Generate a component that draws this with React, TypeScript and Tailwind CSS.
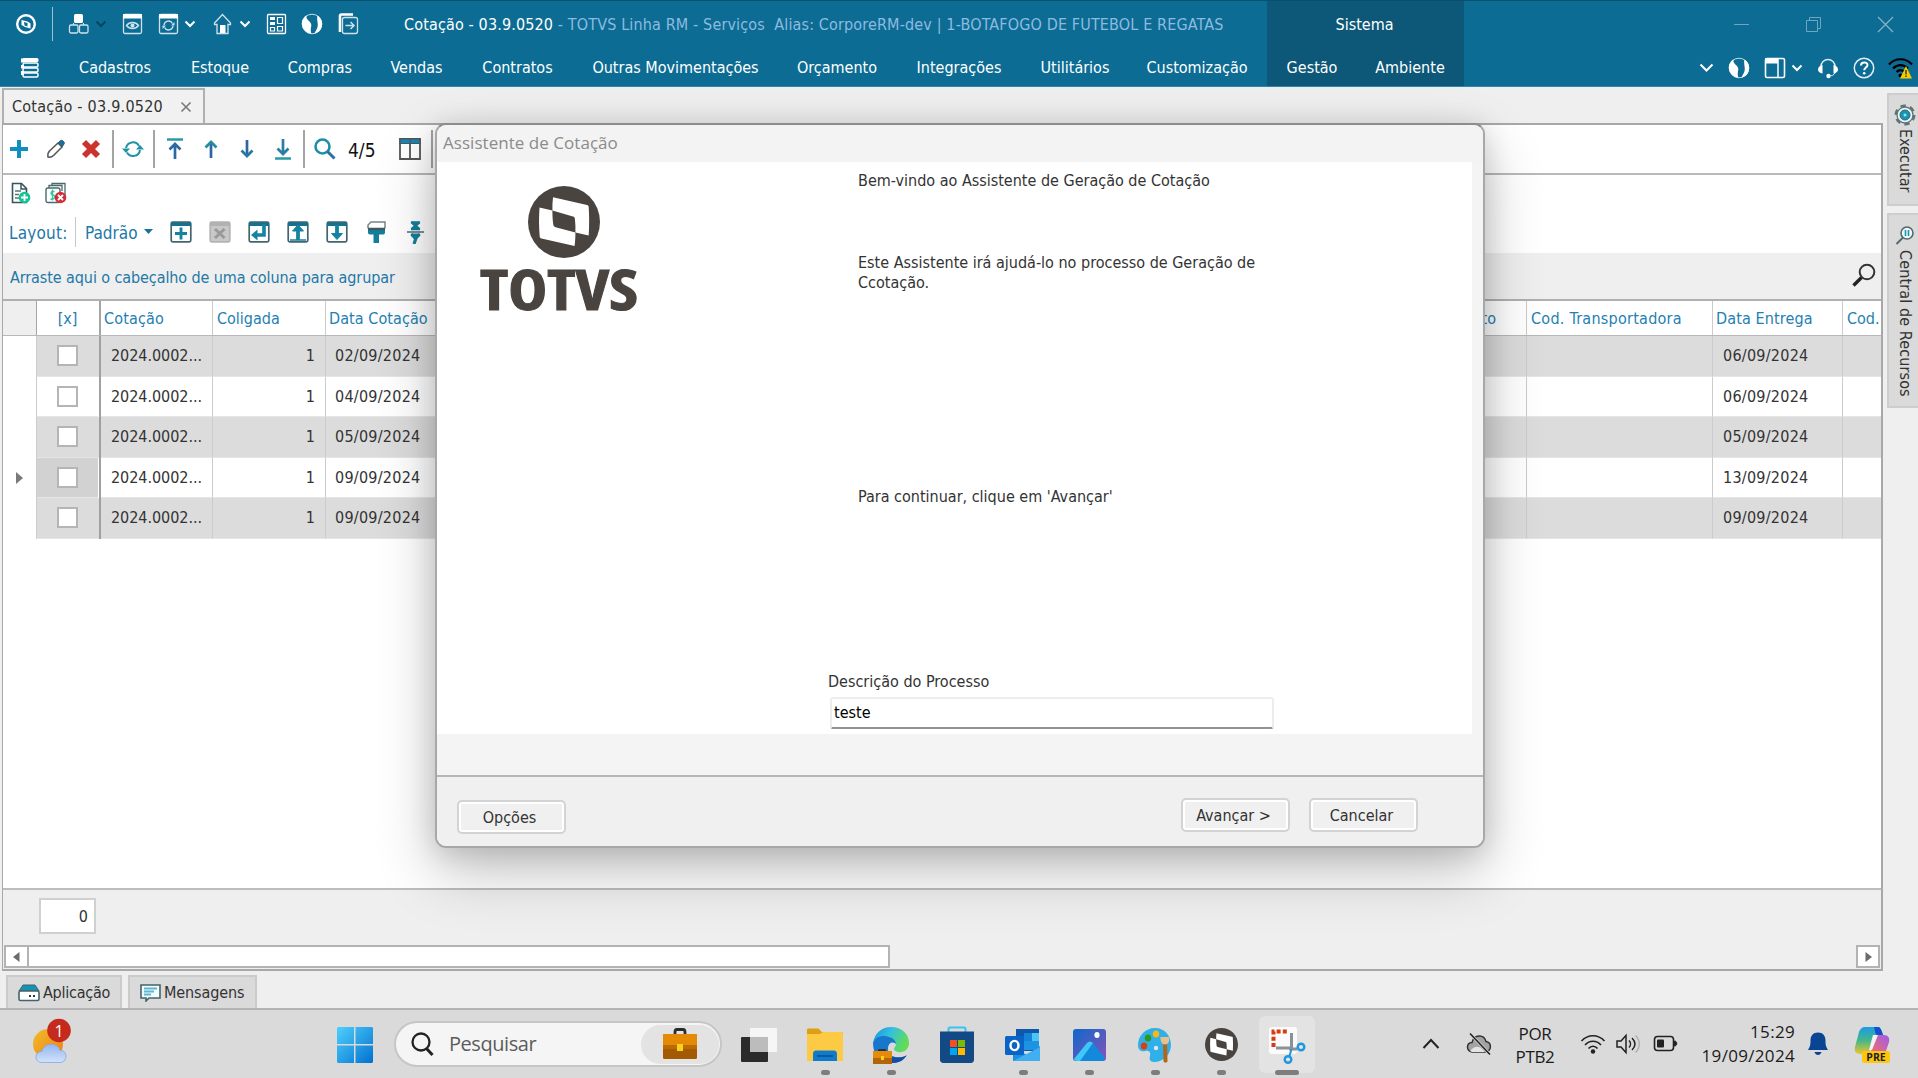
import React from "react";

type SvgProps = { w: number; h: number; className?: string; children: React.ReactNode };

/* Pixel-sized drawing surface for icons. */
function G({ w, h, className = "", children }: SvgProps) {
  return (
    <svg width={w} height={h} viewBox={`0 0 ${w} ${h}`} fill="none" className={`block shrink-0 ${className}`}>
      {children}
    </svg>
  );
}

const Chevron = ({ className = "", color = "#fff" }: { className?: string; color?: string }) => (
  <G w={12} h={8} className={className}>
    <path d="M1.5 1.5 6 6l4.500-4.500" stroke={color} strokeWidth="2" />
  </G>
);

const Globe = ({ className = "" }: { className?: string }) => (
  <G w={22} h={22} className={className}>
    <circle cx="11" cy="11" r="9.800" stroke="#c4dbe6" strokeWidth="1" />
    <path d="M1 8C2 5.500 3.500 3.500 5.500 2.200 5 4.500 6 6.500 8 8c2.200 1.800 2.800 3.800 2 6.500-.5 2-.3 4 .5 6.300C4 20 0 14.500 1 8Z" fill="#fff" />
    <path d="M16.500 2.500c4 2.500 5.500 7 4.200 11.500-.9 3.500-3.700 6-7.200 6.700 1-3 3.300-5.200 3.300-8.700 0-3.500-1.300-6-.3-9.500Z" fill="#fff" />
  </G>
);

const TotvsMark = ({ size, bg, fg, className = "" }: { size: number; bg: string; fg: string; className?: string }) => (
  <svg width={size} height={size} viewBox="0 0 72 72" className={`block shrink-0 ${className}`}>
    <circle cx="36" cy="36" r="36" fill={bg} />
    <path
      fill={fg}
      d="M25 11.200 59 19c1.200.3 1.600.8 1.700 2 .6 9.500.6 18.500 0 28.500l-13.300-2.900c.2-4.600 0-9.200-.5-13.600-.1-1.500-.7-2-2-2.400L24.400 24.600c-.1-4.600.1-9 .6-13.400Z"
    />
    <path
      fill={fg}
      d="m11.500 21.500 12.900 3.100c0 4.600.2 9.500.9 14 .2 1.500.9 2.200 2.300 2.600l19.800 5.400c0 4.700-.2 9-.8 13.400L13.500 52.500c-1.200-.3-1.700-.9-1.800-2-.8-9.500-.9-19-.2-29Z"
    />
  </svg>
);

const MENU = [
  { label: "Cadastros", w: "w-[112px]" },
  { label: "Estoque", w: "w-[98px]" },
  { label: "Compras", w: "w-[102px]" },
  { label: "Vendas", w: "w-[91px]" },
  { label: "Contratos", w: "w-[111px]" },
  { label: "Outras Movimentações", w: "w-[205px]" },
  { label: "Orçamento", w: "w-[118px]" },
  { label: "Integrações", w: "w-[126px]" },
  { label: "Utilitários", w: "w-[106px]" },
  { label: "Customização", w: "w-[138px]" },
];

function TopBar() {
  return (
    <header className="flex h-[87px] shrink-0 border-t border-[#09506f] border-b border-b-[#2f86ab] bg-[#0c6c94] text-white">
      <div className="flex w-[1267px] flex-col">
        <div className="flex h-[46px] items-center">
          <G w={22} h={22} className="ml-[15px]">
            <circle cx="11" cy="11" r="8.800" stroke="#fff" strokeWidth="2.400" />
            <path d="m6.500 7 6 1.500 3 2v5L10 14l-3.500-2Z" fill="#fff" />
            <path d="m9 9 3.500 1v3.500L9.500 12.500Z" fill="#0c6c94" />
          </G>
          <div className="ml-[15px] h-[34px] w-px bg-[#9cc4d6]" />
          <G w={22} h={22} className="ml-[15px]">
            <rect x="6" y="1" width="9" height="9" rx="1.500" fill="#fff" />
            <rect x="1.500" y="12" width="8.500" height="8" rx="1.500" stroke="#cfe2eb" strokeWidth="1.300" />
            <rect x="11.500" y="12" width="8.500" height="8" rx="1.500" stroke="#cfe2eb" strokeWidth="1.300" />
            <path d="M5.500 12v-2M15.500 12v-2" stroke="#cfe2eb" />
          </G>
          <Chevron className="ml-[5px]" color="#0a4560" />
          <G w={22} h={22} className="ml-[15px]">
            <rect x="1.500" y="1.500" width="18" height="19" rx="1.500" stroke="#cfe2eb" strokeWidth="1.300" />
            <path d="M1 1h19v4.500H1z" fill="#fff" />
            <path d="M4.500 12.500c3-4 9-4 12 0-3 4-9 4-12 0Z" stroke="#cfe2eb" strokeWidth="1.300" />
            <circle cx="10.500" cy="12.500" r="2" fill="#cfe2eb" />
          </G>
          <G w={22} h={22} className="ml-[14px]">
            <rect x="1.500" y="1.500" width="18" height="19" rx="1.500" stroke="#cfe2eb" strokeWidth="1.300" />
            <path d="M1 1h19v4.500H1z" fill="#fff" />
            <path d="M6 12a4.500 4.500 0 0 1 8.500-1.500M15 13a4.500 4.500 0 0 1-8.500 1.500" stroke="#cfe2eb" strokeWidth="1.300" />
            <path d="M16.500 9v3.500H13ZM4.500 16v-3.500H8Z" fill="#cfe2eb" />
          </G>
          <Chevron className="ml-[4px]" />
          <G w={20} h={22} className="ml-[17px]">
            <path d="m1.500 10 8-8.500 8 8.500v1.500h-2.500V20.500h-11V11.500H1.500Z" stroke="#cfe2eb" strokeWidth="1.300" />
            <rect x="7" y="12" width="5.500" height="8" fill="#fff" />
          </G>
          <Chevron className="ml-[6px]" />
          <G w={22} h={22} className="ml-[15px]">
            <rect x="1.500" y="1.500" width="18" height="19" rx="1" stroke="#fff" strokeWidth="1.300" />
            <path d="M4 4h5v3H4zM4 9h5v3H4z" fill="#fff" />
            <path d="M11.500 4.500h5v6h-5zM4.500 14.500h4v3.500h-4zM11.500 13.500h5v4.500h-5z" stroke="#fff" strokeWidth="1.200" />
          </G>
          <Globe className="ml-[13px]" />
          <G w={22} h={22} className="ml-[15px]">
            <path d="M2 19V3c0-1 .5-1.500 1.500-1.500H15" stroke="#fff" strokeWidth="2.600" />
            <rect x="4.500" y="4.500" width="15" height="16" rx="2" stroke="#cfe2eb" strokeWidth="1.300" />
            <path d="M7.500 12.500h8m-3-3.500 3.500 3.500-3.500 3.500" stroke="#cfe2eb" strokeWidth="1.500" />
          </G>
          <div className="mt-px ml-[44px] tracking-[0.140px] whitespace-pre">
            Cotação - 03.9.0520
            <span className="text-[#8dbbe0]"> - TOTVS Linha RM - Serviços  Alias: CorporeRM-dev | 1-BOTAFOGO DE FUTEBOL E REGATAS</span>
          </div>
        </div>
        <div className="flex h-[39px] items-center">
          <G w={20} h={22} className="mt-[3px] ml-[20px]">
            <path d="M1 1.500h3v4H1zM1 8h3v3.500H1zM1 14h3v4H1z" fill="#fff" />
            <rect x="2.500" y="1" width="16" height="4" rx="1.500" fill="#fff" />
            <rect x="3" y="6" width="15" height="4" rx="1.500" stroke="#fff" strokeWidth="1.500" />
            <rect x="3" y="11" width="15" height="4" rx="1.500" stroke="#fff" strokeWidth="1.500" />
            <rect x="3" y="16" width="15" height="4" rx="1.500" stroke="#fff" strokeWidth="1.500" />
          </G>
          <nav className="mt-[3px] ml-[19px] flex">
            {MENU.map((m) => (
              <span key={m.label} className={`${m.w} text-center whitespace-nowrap`}>
                {m.label}
              </span>
            ))}
          </nav>
        </div>
      </div>
      <div className="flex w-[197px] flex-col bg-[#0d5878]">
        <div className="flex h-[46px] items-center justify-center pt-px pr-[2px]">Sistema</div>
        <div className="flex h-[39px] items-center pt-[3px]">
          <span className="ml-[19px] w-[52px] text-center">Gestão</span>
          <span className="ml-[36px] w-[72px] text-center">Ambiente</span>
        </div>
      </div>
      <div className="flex flex-1 flex-col">
        <div className="flex h-[46px] items-center">
          <div className="ml-[270px] h-px w-[15px] bg-[#6fa6bf]" />
          <G w={16} h={17} className="ml-[57px]">
            <path d="M.5 4.500h11v11H.5zM3.500 4.500v-3h11v11h-3" stroke="#6fa6bf" />
          </G>
          <G w={17} h={17} className="ml-[55px]">
            <path d="m1 1 15 15M16 1 1 16" stroke="#86b5ca" strokeWidth="1.200" />
          </G>
        </div>
        <div className="flex h-[39px] items-center pt-[2px]">
          <G w={15} h={10} className="ml-[235px]">
            <path d="m1.500 1.500 6 6 6-6" stroke="#fff" strokeWidth="2" />
          </G>
          <Globe className="ml-[14px]" />
          <G w={22} h={22} className="ml-[14px]">
            <rect x="1.500" y="1.500" width="19" height="19" rx="1.500" stroke="#fff" strokeWidth="1.600" />
            <path d="M1 1h13v5.500H1z" fill="#fff" />
            <path d="M14 1v20" stroke="#fff" strokeWidth="1.500" />
          </G>
          <Chevron className="ml-[5px]" />
          <G w={22} h={22} className="ml-[14px]">
            <path d="M4 14V9.500a7 7 0 0 1 14 0V14" stroke="#d9e8ef" strokeWidth="1.500" />
            <path d="M5.500 8v8.500C2.500 16 1 14.500 1 12.500S2.500 8.500 5.500 8ZM16.500 8v8.500c3-.5 4.500-2 4.500-4s-1.500-4-4.500-4.500Z" fill="#fff" />
            <circle cx="11.500" cy="19" r="2.200" fill="#fff" />
            <path d="M18 16c-1 2-3 3-6 3" stroke="#d9e8ef" />
          </G>
          <G w={22} h={22} className="ml-[14px]">
            <circle cx="11" cy="11" r="9.700" stroke="#e3eef3" strokeWidth="1.500" />
            <path d="M8 8.500c0-4 6.500-4 6.500-.5 0 2.500-3.300 2.500-3.300 5.300" stroke="#fff" strokeWidth="2" />
            <circle cx="11.200" cy="16.200" r="1.300" fill="#fff" />
          </G>
          <G w={26} h={22} className="ml-[13px]">
            <path d="M1 7.500c6-7 17-7 23 0M5 11.500c4.500-4.500 10.500-4.500 15 0M8.500 15c2.500-2.500 5.500-2.500 8 0" stroke="#000" strokeWidth="2.200" />
            <circle cx="12.500" cy="18.500" r="2" fill="#000" />
            <path d="m18 9 6 12.500H12Z" fill="#f5cb00" />
            <path d="M18 13v4.500M18 18.500v1.500" stroke="#3d3300" strokeWidth="1.400" />
          </G>
        </div>
      </div>
    </header>
  );
}

const Sep = ({ className = "" }: { className?: string }) => <div className={`h-[38px] w-[2px] shrink-0 bg-[#a5a5a5] ${className}`} />;

const LayoutBox = ({ className = "", gray = false, children }: { className?: string; gray?: boolean; children: React.ReactNode }) => (
  <G w={22} h={22} className={className}>
    <rect x="1.200" y="1.200" width="19.600" height="19.600" rx="1.500" fill={gray ? "#c8c8c8" : "none"} stroke={gray ? "#b2b2b2" : "#44646e"} strokeWidth="1.700" />
    <path d="M1 1.500h20v3.500H1z" fill={gray ? "#b2b2b2" : "#14728c"} />
    {children}
  </G>
);

function Toolbars() {
  return (
    <>
      <div className="flex h-[50px] shrink-0 items-center border-b-2 border-[#b9b9b9]">
        <G w={20} h={20} className="ml-[6px]">
          <path d="M10 1v18M1 10h18" stroke="#118fc0" strokeWidth="4" />
        </G>
        <G w={20} h={20} className="ml-[17px]">
          <path d="M2 18c-.5-3 0-4.500 1.500-6L12 4l4 4-8.500 8.500c-1.500 1.500-3 2-5.500 1.500Z" stroke="#555" strokeWidth="1.500" />
          <path d="m12 4 2.500-2.500c1.500-1 5 2 3.500 3.500L16 8Z" fill="#1173a8" stroke="#45525a" />
        </G>
        <G w={20} h={20} className="ml-[15px]">
          <path d="m3 3 14 14M17 3 3 17" stroke="#cb342d" strokeWidth="5.800" />
        </G>
        <Sep className="ml-[11px]" />
        <G w={22} h={20} className="ml-[8px]">
          <path d="M4 9a7 7 0 0 1 13-2M18 11a7 7 0 0 1-13 2.500" stroke="#1e93a6" strokeWidth="2" />
          <path d="M0 9.500h8L4 14ZM14 10.500h8L18 6Z" fill="#1e93a6" />
        </G>
        <Sep className="ml-[9px]" />
        <G w={16} h={22} className="ml-[12px]">
          <path d="M0 1.500h16" stroke="#2a9aa4" strokeWidth="2.500" />
          <path d="M8 21V6M2.500 11.500 8 6l5.500 5.500" stroke="#2a6aa3" strokeWidth="2.700" />
        </G>
        <G w={14} h={20} className="ml-[21px]">
          <path d="M7 19V3" stroke="#2f64a6" strokeWidth="2.700" />
          <path d="M1.500 8.500 7 3l5.500 5.500" stroke="#228d9f" strokeWidth="2.700" />
        </G>
        <G w={14} h={20} className="ml-[22px]">
          <path d="M7 1v16" stroke="#2f64a6" strokeWidth="2.700" />
          <path d="M1.500 11.500 7 17l5.500-5.500" stroke="#2679a2" strokeWidth="2.700" />
        </G>
        <G w={16} h={22} className="ml-[21px]">
          <path d="M0 20.500h16" stroke="#2a9aa4" strokeWidth="2.500" />
          <path d="M8 1v15M2.500 10.500 8 16l5.500-5.500" stroke="#2a7fa3" strokeWidth="2.700" />
        </G>
        <Sep className="ml-[12px]" />
        <G w={22} h={22} className="ml-[9px]">
          <circle cx="8.500" cy="8.500" r="7" stroke="#1e8fa8" strokeWidth="2.600" />
          <path d="m13.500 13.500 7 7" stroke="#2a6fa6" strokeWidth="3" />
        </G>
        <span className="mt-[2px] ml-[12px] w-[30px] text-[19px] text-[#111]">4/5</span>
        <G w={22} h={22} className="ml-[21px]">
          <path d="M1 1h20v20H1zM11 1v20" stroke="#555" strokeWidth="1.800" />
          <path d="M1 1h20v4.500H1z" fill="#1188bb" />
          <path d="M1 1h20v4.500H1zM11 1v5" stroke="#555" strokeWidth="1.200" />
        </G>
        <Sep className="ml-[10px]" />
      </div>
      <div className="flex h-[36px] shrink-0 items-center pb-px">
        <G w={20} h={22} className="ml-[8px]">
          <path d="M1.500 1.500h9l5 5V20.500h-14Z" stroke="#35565c" strokeWidth="1.600" />
          <path d="M10 1v6h6" stroke="#35565c" strokeWidth="1.500" />
          <path d="M4 9h6M4 12.500h4M4 16h4" stroke="#55757b" strokeWidth="1.400" />
          <circle cx="13.500" cy="15.500" r="5.800" fill="#14c394" />
          <path d="M13.500 12v7M10 15.500h7" stroke="#fff" strokeWidth="1.800" />
        </G>
        <G w={22} h={22} className="ml-[14px]">
          <path d="M7 3.500V1.500h13V13M4 6V3.500h13V9" stroke="#4b6a6e" strokeWidth="1.300" />
          <rect x="1" y="6" width="14" height="14.500" rx="2" stroke="#4b6a6e" strokeWidth="1.400" />
          <path d="M9.500 9.500c-4-1-4.500 3-1.500 3.500s2.500 5-2.500 4M7.500 7.500v11" stroke="#2ec9a0" strokeWidth="1.400" />
          <circle cx="15.500" cy="15.500" r="5.800" fill="#cf3038" />
          <path d="m13 13 5 5M18 13l-5 5" stroke="#fff" strokeWidth="1.800" />
        </G>
      </div>
      <div className="flex h-[42px] shrink-0 items-center text-[#2278a8]">
        <span className="mt-px ml-[6px] w-[60px] text-[17px] tracking-[0.200px]">Layout:</span>
        <div className="ml-[6px] h-[30px] w-px bg-[#c8c8c8]" />
        <span className="mt-px ml-[9px] w-[56px] text-[17px]">Padrão</span>
        <G w={9} h={6} className="ml-[3px]">
          <path d="M0 0h9L4.500 5Z" fill="#1d6f93" />
        </G>
        <LayoutBox className="ml-[17px]">
          <path d="M11 6.500v12M5 12.500h12" stroke="#1582a0" strokeWidth="2.900" />
        </LayoutBox>
        <LayoutBox className="ml-[17px]" gray>
          <path d="m6 8 9.500 9M15.500 8 6 17" stroke="#999" strokeWidth="3" />
        </LayoutBox>
        <LayoutBox className="ml-[17px]">
          <path d="M16 3v11H8" stroke="#1582a0" strokeWidth="3.600" />
          <path d="M9.500 8.500v11L3 14Z" fill="#1582a0" />
        </LayoutBox>
        <LayoutBox className="ml-[17px]">
          <path d="M11 19V8" stroke="#1582a0" strokeWidth="3.800" />
          <path d="M5.500 10 11 4l5.500 6Z" fill="#1582a0" stroke="#1582a0" />
          <path d="M3 19h16" stroke="#1582a0" strokeWidth="1.500" />
        </LayoutBox>
        <LayoutBox className="ml-[17px]">
          <path d="M11 4v10" stroke="#1582a0" strokeWidth="3.800" />
          <path d="m5.500 12.500 5.500 6 5.500-6Z" fill="#1582a0" stroke="#1582a0" />
        </LayoutBox>
        <G w={19} h={22} className="ml-[19px]">
          <path d="M1 7.500V4l3-3h14v6.500" stroke="#78868b" strokeWidth="1.500" />
          <path d="M1 7h17v4.500c0 1.500-1 2-2.500 2H12V22H6.500v-8.500H3.500C2 13.500 1 13 1 11.500Z" fill="#157f9b" />
          <path d="M1 8h17" stroke="#3f5a63" strokeWidth="2.500" />
        </G>
        <G w={17} h={24} className="ml-[21px]">
          <path d="m4.500 2 8 7.500M12.500 2l-8 7.500M4 2.500h9M4 9h9" stroke="#157f9b" strokeWidth="2.600" />
          <path d="M0 12h17" stroke="#6d8288" strokeWidth="1.800" />
          <path d="m4.500 14 4 4.500 4-4.500M9 18l-2 6M4 15h9" stroke="#157f9b" strokeWidth="3.200" />
        </G>
      </div>
    </>
  );
}

const ROWS = [
  { a: "02/09/2024", b: "06/09/2024" },
  { a: "04/09/2024", b: "06/09/2024" },
  { a: "05/09/2024", b: "05/09/2024" },
  { a: "09/09/2024", b: "13/09/2024" },
  { a: "09/09/2024", b: "09/09/2024" },
];

const COLS = "grid grid-cols-[34px_61px_3px_112px_113px_1201px_186px_130px_1fr]";

function DataGrid() {
  return (
    <div className="flex flex-1 flex-col">
      <div className="flex h-[48px] shrink-0 items-center justify-between border-b-2 border-[#b0b0b0] bg-[#efefef] pr-[5px] pl-[7px] text-[#2278a8]">
        <span className="mt-[3px] tracking-[-0.090px]">Arraste aqui o cabeçalho de uma coluna para agrupar</span>
        <G w={24} h={24} className="-mt-[3px]">
          <circle cx="15" cy="9" r="7.300" stroke="#333" strokeWidth="2" />
          <path d="m9.500 14.500-8 8" stroke="#222" strokeWidth="3.400" />
        </G>
      </div>
      <div className={`${COLS} h-[35px] shrink-0 border-b border-[#b8b8b8] text-[#2480b3]`}>
        <div className="border-r border-[#a5a5a5] bg-[#efefef]" />
        <div className="flex items-center justify-center pt-[2px]">[x]</div>
        <div className="border-r-2 border-[#a5a5a5]" />
        <div className="flex items-center border-r border-[#ccc] pt-[2px] pl-[3px] tracking-[0.150px]">Cotação</div>
        <div className="flex items-center border-r border-[#ccc] pt-[2px] pl-[4px]">Coligada</div>
        <div className="flex items-center justify-between border-r border-[#ccc] pt-[2px] pr-[30px] pl-[3px]">
          <span className="tracking-[0.080px]">Data Cotação</span>
          <span>to</span>
        </div>
        <div className="flex items-center border-r border-[#ccc] pt-[2px] pl-[4px] tracking-[0.260px]">Cod. Transportadora</div>
        <div className="flex items-center border-r border-[#ccc] pt-[2px] pl-[3px] tracking-[0.120px]">Data Entrega</div>
        <div className="flex items-center overflow-hidden pt-[2px] pl-[4px]">Cod.</div>
      </div>
      {ROWS.map((r, i) => {
        const bg = i % 2 === 0 ? "bg-[#dcdcdc]" : "bg-white";
        return (
          <div key={i} className={`${COLS} h-[40.500px] shrink-0 text-[16px] text-[#333]`}>
            <div className="flex items-center border-r border-[#ccc] bg-white pl-[13px]">
              {i === 3 && (
                <G w={7} h={12}>
                  <path d="M0 0v12l7-6Z" fill="#7a7a7a" />
                </G>
              )}
            </div>
            <div className={`${i === 3 ? "bg-[#d2d2d2]" : bg} flex items-center justify-center border-b border-[#e6e6e6]`}>
              <div className="h-[21px] w-[21px] border-2 border-[#b5b5b5] bg-white" />
            </div>
            <div className={`${bg} border-r-2 border-[#a0a0a0]`} />
            <div className={`${bg} flex items-center border-r border-b border-[#ccc] border-b-[#e6e6e6] pt-px pl-[10px] tracking-[-0.040px]`}>2024.0002...</div>
            <div className={`${bg} flex items-center justify-end border-r border-b border-[#ccc] border-b-[#e6e6e6] pt-px pr-[10px]`}>1</div>
            <div className={`${bg} flex items-center border-r border-b border-[#ccc] border-b-[#e6e6e6] pt-px pl-[9px] tracking-[0.250px]`}>{r.a}</div>
            <div className={`${bg} border-r border-b border-[#ccc] border-b-[#e6e6e6]`} />
            <div className={`${bg} flex items-center border-r border-b border-[#ccc] border-b-[#e6e6e6] pt-px pl-[10px] tracking-[0.250px]`}>{r.b}</div>
            <div className={`${bg} border-b border-b-[#e6e6e6]`} />
          </div>
        );
      })}
      <div className="flex-1" />
      <div className="flex h-[81px] shrink-0 flex-col border-t-2 border-[#bdbdbd] bg-[#efefef]">
        <div className="mt-[8px] ml-[36px] flex h-[36px] w-[57px] items-center justify-end border-2 border-[#d0d0d0] bg-white pt-px pr-[6px] text-[#333]">
          0
        </div>
        <div className="mt-[11px] flex h-[23px] items-stretch">
          <div className="ml-[1px] flex w-[25px] items-center justify-center border-2 border-[#b3b3b3] bg-white">
            <G w={7} h={10}>
              <path d="M6.500 0v10L0 5Z" fill="#6b6b6b" />
            </G>
          </div>
          <div className="w-[861px] border-2 border-l-0 border-[#b3b3b3] bg-white" />
          <div className="flex-1" />
          <div className="mr-[1px] flex w-[24px] items-center justify-center border-2 border-[#b3b3b3] bg-white">
            <G w={7} h={10}>
              <path d="M.5 0v10L7 5Z" fill="#6b6b6b" />
            </G>
          </div>
        </div>
      </div>
    </div>
  );
}

function SideTabs() {
  return (
    <aside className="mt-[6px] ml-[4px] flex w-[31px] shrink-0 flex-col gap-[7px]">
      <div className="flex h-[113px] flex-col items-center border-2 border-r-0 border-[#cdcdcd] bg-[#dadada] pt-[9px]">
        <G w={22} h={22} className="ml-[2px]">
          <circle cx="11" cy="11" r="8.500" stroke="#5d7479" strokeWidth="4" strokeDasharray="5 3.900" />
          <circle cx="11" cy="11" r="8" fill="#eef2f3" stroke="#5d7479" strokeWidth="1.300" />
          <circle cx="11" cy="11" r="5" fill="#1596b5" stroke="#32636f" />
          <circle cx="11" cy="11" r="1.500" fill="#8fe3f5" />
        </G>
        <span className="mt-[3px] ml-[3px] leading-[24px] text-[#333] [writing-mode:vertical-rl]">Executar</span>
      </div>
      <div className="flex h-[195px] flex-col items-center border-2 border-r-0 border-[#cdcdcd] bg-[#dadada] pt-[10px]">
        <G w={20} h={22} className="ml-[2px]">
          <circle cx="12" cy="8" r="6" fill="#f2f6f7" stroke="#53696f" strokeWidth="1.600" />
          <path d="M8 12.500 1.500 19" stroke="#53696f" strokeWidth="2" />
          <path d="M10.500 5v6M13.500 5v6" stroke="#1596b5" strokeWidth="1.600" />
        </G>
        <span className="mt-[3px] ml-[3px] leading-[24px] tracking-[0.120px] text-[#333] [writing-mode:vertical-rl]">Central de Recursos</span>
      </div>
    </aside>
  );
}

const DlgButton = ({ label, className = "" }: { label: string; className?: string }) => (
  <button className={`flex h-[34px] w-[109px] items-center justify-center rounded-[5px] border-2 border-[#d3d3d3] bg-[#f0f0f0] pt-[2px] pr-[4px] text-[#333] shadow-[inset_0_0_0_2px_#fff] ${className}`}>
    {label}
  </button>
);

function Dialog() {
  return (
    <div className="absolute top-[123px] left-[435px] flex h-[725px] w-[1050px] flex-col overflow-hidden rounded-[11px] border-2 border-[#a8a8a8] border-t-[#8c8c8c] bg-[#f4f4f4] shadow-[0_24px_60px_rgba(0,0,0,0.24),0_4px_28px_rgba(0,0,0,0.14)]">
      <div className="flex h-[37px] shrink-0 items-center bg-[#f3f3f3] pb-[2px] pl-[6px] font-['Open_Sans',sans-serif] text-[17px] tracking-[0.040px] text-[#8b8b8b] [font-stretch:normal]">
        Assistente de Cotação
      </div>
      <div className="mr-[11px] flex h-[572px] shrink-0 bg-white text-[#333]">
        <div className="flex w-[391px] flex-col pt-[24px] pl-[43px]">
          <TotvsMark size={72} bg="#4a4440" fg="#fff" className="ml-[48px]" />
          <svg width="158" height="52" viewBox="0 0 158 52" className="mt-[6px] block overflow-visible">
            <text x="0" y="46" textLength="158" lengthAdjust="spacingAndGlyphs" fill="#4a4440" fontFamily="'Open Sans', sans-serif" fontWeight="700" fontSize="55" stroke="#4a4440" strokeWidth="1">
              TOTVS
            </text>
          </svg>
        </div>
        <div className="flex flex-1 flex-col">
          <p className="mt-[9px] ml-[30px] leading-[20px]">Bem-vindo ao Assistente de Geração de Cotação</p>
          <p className="mt-[62px] ml-[30px] w-[420px] leading-[20px]">
            Este Assistente irá ajudá-lo no processo de Geração de
            <br />
            Ccotação.
          </p>
          <p className="mt-[194px] ml-[30px] leading-[20px]">Para continuar, clique em 'Avançar'</p>
          <label className="mt-[165px] leading-[20px]">Descrição do Processo</label>
          <div className="mt-[5px] ml-[2px] flex h-[32px] w-[444px] items-center rounded-[3px] border-2 border-[#ececec] border-b-[#929292] bg-white pl-[2px] text-black">
            teste
          </div>
        </div>
      </div>
      <div className="h-[41px] shrink-0" />
      <div className="flex flex-1 items-start border-t-2 border-[#b5b5b5] bg-[#f0f0f0]">
        <DlgButton label="Opções" className="mt-[23px] ml-[20px]" />
        <DlgButton label="Avançar >" className="mt-[21px] ml-[615px]" />
        <DlgButton label="Cancelar" className="mt-[21px] ml-[19px]" />
      </div>
    </div>
  );
}

const Task = ({ children, dot = "" }: { children: React.ReactNode; dot?: string }) => (
  <div className="flex h-full w-[66px] flex-col items-center">
    <div className={`mt-[6px] flex h-[57px] w-[56px] flex-col items-center rounded-[6px] ${dot === "active" ? "bg-[#e3e3e3]" : ""}`}>
      <div className="flex h-[57px] items-center">{children}</div>
    </div>
    {dot && <div className={`-mt-[3px] h-[5px] shrink-0 rounded-full bg-[#7d7d7d] ${dot === "active" ? "w-[24px]" : "w-[9px]"}`} />}
  </div>
);

const Briefcase = ({ w, h }: { w: number; h: number }) => (
  <svg width={w} height={h} viewBox="0 0 34 28" className="mt-[2px] block overflow-visible">
    <path d="M12 4V1c0-1.500 1-2.500 2-2.500h6c1 0 2 1 2 2.500v3" fill="none" stroke="#2c2c2c" strokeWidth="2.800" />
    <rect y="3" width="34" height="25" rx="1.500" fill="#a45a05" />
    <path d="M1.500 3h31c1 0 1.500.5 1.500 1.500V16H0V4.500C0 3.500.5 3 1.500 3Z" fill="#e48a07" />
    <rect y="14" width="34" height="4" fill="#bb6b05" />
    <rect x="14" y="13" width="6" height="7" fill="#f9d11b" />
  </svg>
);

function Taskbar() {
  return (
    <footer className="flex h-[70px] shrink-0 items-start border-t-2 border-[#b3b3b3] bg-[#dadada] font-['Open_Sans',sans-serif] text-[#1b1b1b] [font-stretch:normal]">
      <svg width="42" height="48" viewBox="0 0 42 48" className="mt-[8px] ml-[31px] block shrink-0">
        <defs>
          <linearGradient id="sun" x1="0" y1="0" x2="1" y2="1">
            <stop offset="0" stopColor="#f0bd2c" />
            <stop offset="1" stopColor="#f07d12" />
          </linearGradient>
          <linearGradient id="cloud" x1="0" y1="0" x2="0" y2="1">
            <stop offset="0" stopColor="#93b6ee" />
            <stop offset="1" stopColor="#d3e2fb" />
          </linearGradient>
        </defs>
        <circle cx="17" cy="26" r="15" fill="url(#sun)" />
        <path d="M11 44.500c-8 0-8-11 0-11 1-9 16-10 18-1 8-1 8 12 0 12Z" fill="url(#cloud)" stroke="#84a8e6" strokeWidth=".8" />
        <circle cx="28" cy="12.500" r="11.800" fill="#c42b1c" />
        <text x="28" y="18.500" textAnchor="middle" fill="#fff" fontSize="16" fontFamily="'Open Sans', sans-serif">
          1
        </text>
      </svg>
      <svg width="36" height="36" viewBox="0 0 36 36" className="mt-[17px] ml-[264px] block shrink-0">
        <defs>
          <linearGradient id="win" x1="0" y1="0" x2="1" y2="1" gradientUnits="objectBoundingBox">
            <stop offset="0" stopColor="#4fd0fc" />
            <stop offset="1" stopColor="#0271d0" />
          </linearGradient>
        </defs>
        <path d="M1 0h16v17H0V1ZM18.500 0H35l1 1v16H18.500ZM0 18.500h17V36H1l-1-1ZM18.500 18.500H36V35l-1 1H18.500Z" fill="url(#win)" />
      </svg>
      <div className="mt-[11px] ml-[21px] flex h-[46px] w-[328px] shrink-0 items-center rounded-full border-2 border-[#c6c6c6] bg-[#f5f5f5]">
        <G w={23} h={25} className="ml-[15px]">
          <circle cx="10" cy="10" r="8.500" stroke="#222" strokeWidth="2.300" />
          <path d="m15.500 16.500 6 6.500" stroke="#222" strokeWidth="3" />
        </G>
        <span className="ml-[15px] flex-1 text-[20px] tracking-[-0.450px] text-[#5c5c5c]">Pesquisar</span>
        <div className="mr-[1px] flex h-[39px] w-[78px] items-center justify-center rounded-full bg-[#e3e3e3]">
          <Briefcase w={34} h={28} />
        </div>
      </div>
      <div className="ml-[4px] flex h-full shrink-0">
        <Task>
          <G w={36} h={36}>
            <rect x="0" y="10" width="27" height="25" rx="1" fill="#2b2b2b" />
            <rect x="9" y="1" width="27" height="24" rx="1" fill="#f6f6f6" />
            <path d="M9 10h18v15H9z" fill="#bcbcbc" />
          </G>
        </Task>
        <Task dot="dot">
          <G w={36} h={34}>
            <path d="M0 2c0-1 .5-1.500 1.500-1.500h10L15 4h21v5H0Z" fill="#dfa00f" />
            <path d="M0 6h13l3-2h18.500c1 0 1.500.5 1.500 1.500V33H0Z" fill="#fdca45" />
            <path d="M6 33v-7c0-2 1-3.500 3-3.500h18c2 0 3 1.500 3 3.500v7Z" fill="#117bcb" />
            <path d="M10 28h16" stroke="#0a4f93" strokeWidth="1.500" />
          </G>
        </Task>
        <Task dot="dot">
          <svg width="36" height="38" viewBox="0 0 36 38" className="block">
            <defs>
              <linearGradient id="edge" x1="0" y1="0" x2="1" y2=".4">
                <stop offset="0" stopColor="#1793dd" />
                <stop offset=".5" stopColor="#33c0e0" />
                <stop offset="1" stopColor="#62dc55" />
              </linearGradient>
            </defs>
            <path d="M0 18C1 7 9 1 18 1c11 0 18 7 18 16 0 7-6 10-11 9-4-1-5-3-3-5 3-4-1-8-6-8-7 0-13 1-16 5Z" fill="url(#edge)" />
            <path d="M0 17c3-7 10-8 16-6 4 1 7 4 7 7-4-3-8-1-8 5 0 8 9 10 18 7-3 5-8 7-14 7C6 37 0 28 0 17Z" fill="#1677cb" />
            <path d="M14 25c1 6 12 9 20 4-3 5-8 8-15 8-4-3-6-7-5-12Z" fill="#134f9e" />
            <g transform="translate(0 23)">
              <path d="M6 3V1h6v2" stroke="#222" fill="none" strokeWidth="1.500" />
              <rect y="2" width="19" height="13" fill="#b4650a" />
              <rect y="2" width="19" height="7" fill="#e58a0a" />
              <rect x="8" y="7" width="3" height="4" fill="#f9d11b" />
            </g>
          </svg>
        </Task>
        <Task>
          <G w={36} h={38}>
            <path d="M9.500 7V3c0-1 .5-1.500 1.500-1.500h14c1 0 1.500.5 1.500 1.500v4" stroke="#37c3f4" strokeWidth="2" />
            <path d="M1 5.500h34v28c0 2-1 3.500-3.500 3.500h-27C2 37 1 35.500 1 33.500Z" fill="#134a86" />
            <path d="M11 14h7v7h-7z" fill="#f25022" />
            <path d="M19 14h7v7h-7z" fill="#7fba00" />
            <path d="M11 22h7v7h-7z" fill="#00a4ef" />
            <path d="M19 22h7v7h-7z" fill="#ffb900" />
          </G>
        </Task>
        <Task dot="dot">
          <G w={36} h={34}>
            <path d="M11 1h23v22H11z" fill="#0d58ad" />
            <path d="M19 5h8v8h-8z" fill="#1683d8" />
            <path d="M27 5h7v8h-7z" fill="#4cc5f5" />
            <path d="M19 13h15v9H19z" fill="#1c93e3" />
            <path d="M8 19 22 27l13-9v15H8Z" fill="#1b8fe4" />
            <path d="m8 33 27-14v14Z" fill="#41aef0" />
            <rect y="8" width="19" height="19" rx="1.500" fill="#0a63c6" />
            <ellipse cx="9.500" cy="17.500" rx="4" ry="4.600" stroke="#fff" strokeWidth="2.400" />
          </G>
        </Task>
        <Task dot="dot">
          <svg width="33" height="34" viewBox="0 0 33 34" className="block">
            <defs>
              <linearGradient id="photo" x1="0" y1="0" x2="1" y2="1">
                <stop offset="0" stopColor="#0d69cb" />
                <stop offset="1" stopColor="#8a52b8" />
              </linearGradient>
            </defs>
            <rect y="1" width="33" height="32" rx="3" fill="url(#photo)" />
            <path d="m1 31 13-16c2-2 4-2 6 0l12 15c0 2-2 3-3 3H4c-1 0-3-1-3-2Z" fill="#1389dc" />
            <path d="m1 31 13-16c2-2 4-2 6 0L7 33H4c-1 0-3-1-3-2Z" fill="#3ec8f7" />
            <ellipse cx="24" cy="7" rx="2.600" ry="3" fill="#fff" />
          </svg>
        </Task>
        <Task dot="dot">
          <G w={36} h={36}>
            <path d="M18 1C8 1 1 9 1 18c0 5 3 7 7 6 4-1 6 1 5 5-1 3 0 6 4 6 10 0 17-8 17-17S28 1 18 1Z" fill="#2fb0ea" />
            <ellipse cx="7" cy="19" rx="3.200" ry="3.500" fill="#d8400f" />
            <ellipse cx="11" cy="11" rx="3.200" ry="3.500" fill="#2c9a17" />
            <ellipse cx="19" cy="7" rx="3.200" ry="3.500" fill="#f5b915" />
            <circle cx="19" cy="21" r="2.200" fill="#dfe6ea" />
            <path d="M26 16h4l.5 18c0 2-4 2-4 0Z" fill="#b26617" />
            <path d="M23.500 10h8.500c1 4-1 7.500-4 7.500s-5-3.500-4.500-7.500Z" fill="#e8c08d" />
          </G>
        </Task>
        <Task dot="dot">
          <TotvsMark size={33} bg="#4a4440" fg="#fff" />
        </Task>
        <Task dot="active">
          <G w={38} h={38}>
            <rect x="1" y="1" width="28" height="27" rx="3" fill="#fbfbfb" />
            <path d="M5.500 21V5.500H19" stroke="#d83b10" strokeWidth="4" strokeDasharray="4 2.200" />
            <path d="M23.500 7v15M23.500 22H8M21 23h8" stroke="#8a9197" strokeWidth="3" />
            <circle cx="33" cy="21" r="3.300" stroke="#1e97e0" strokeWidth="2.400" />
            <circle cx="20" cy="33.500" r="3.300" stroke="#1e97e0" strokeWidth="2.400" />
            <path d="m23.500 23-2 7" stroke="#1e97e0" strokeWidth="2" />
          </G>
        </Task>
      </div>
      <div className="flex h-[68px] items-center">
        <G w={18} h={12} className="ml-[102px]">
          <path d="m1.500 10 7.500-8 7.500 8" stroke="#222" strokeWidth="2" />
        </G>
        <G w={26} h={24} className="ml-[26px]">
          <path d="M6 20c-6-1-6-9 0-9.500C8 2 18 2 20 9.500c6 1 6 10-1 10.500Z" fill="#a3a3a3" stroke="#333" strokeWidth="1.500" />
          <path d="M4 19c4-5 9-6 13-1l2 2H6Z" fill="#e4e4e4" />
          <path d="m4 1.500 20 21" stroke="#dadada" strokeWidth="3" />
          <path d="m4 1.500 20 21" stroke="#222" strokeWidth="1.600" />
        </G>
        <div className="mt-[2px] ml-[21px] w-[44px] text-center text-[17px] leading-[23px] tracking-[-0.300px]">
          POR
          <br />
          PTB2
        </div>
        <G w={26} h={22} className="ml-[23px]">
          <path d="M1.500 8C8 1 18 1 24.500 8M5 12c4.500-5 11.500-5 16 0M8.500 15.500c2.500-3 6.500-3 9 0" stroke="#222" strokeWidth="1.600" />
          <circle cx="13" cy="18.500" r="2.200" fill="#222" />
        </G>
        <G w={26} h={22} className="ml-[10px]">
          <path d="M1 8h4l5-5.500v17L5 14H1Z" stroke="#222" strokeWidth="1.500" />
          <path d="M13 7.500c2 2 2 5 0 7M16 5c4 4 4 8 0 12" stroke="#222" strokeWidth="1.500" />
          <path d="M19.500 2.500c5 5 5 12 0 17" stroke="#b0b0b0" strokeWidth="1.500" />
        </G>
        <G w={26} h={18} className="ml-[11px]">
          <rect x="1.500" y="1.500" width="19" height="14" rx="3" stroke="#222" strokeWidth="1.600" />
          <rect x="4" y="4.500" width="7" height="8" rx="1" fill="#222" />
          <path d="M21.500 6c3 0 3 5 0 5Z" fill="#222" stroke="#222" />
        </G>
        <div className="ml-[16px] w-[100px] text-right text-[17px] leading-[24px] tracking-[0.320px]">
          15:29
          <br />
          19/09/2024
        </div>
        <G w={22} h={26} className="ml-[12px]">
          <path d="M11 1.500c5 0 7.500 3.500 7.500 8 0 5 .5 6 2.500 9.500H1c2-3.500 2.500-4.500 2.500-9.500 0-4.500 2.500-8 7.500-8ZM7.500 21h7c-1 4-6 4-7 0Z" fill="#0a4594" />
        </G>
        <svg width="38" height="42" viewBox="0 0 38 42" className="ml-[25px] block shrink-0">
          <defs>
            <linearGradient id="cpa" x1="0" y1="0" x2="0" y2="1">
              <stop offset="0" stopColor="#1a9be8" />
              <stop offset=".5" stopColor="#43b78a" />
              <stop offset="1" stopColor="#efc52b" />
            </linearGradient>
            <linearGradient id="cpb" x1="1" y1="0" x2="0" y2="1">
              <stop offset="0" stopColor="#a05af0" />
              <stop offset="1" stopColor="#f8705c" />
            </linearGradient>
          </defs>
          <path d="M11 4h13c2 0 3 2 4 5l1 3h-6l-8 17c-1 1-2 2-4 2H6c-4 0-6-3-5-7L5 9c1-3 3-5 6-5Z" fill="url(#cpa)" />
          <path d="M20 4h4c2 0 3 2 4 5l1 3h-6c-2-1-2-5-3-8Z" fill="#1450cc" />
          <path d="M22 12h8c4 0 6 3 5 7l-3 9c-1 2-3 3-6 3H16Z" fill="url(#cpb)" />
          <path d="m15 27 4-15h5l-6 15Z" fill="#f3f3f3" />
          <rect x="8" y="28" width="28" height="12" rx="2.500" fill="#fdc70c" />
          <text x="22" y="37.800" textAnchor="middle" fontSize="10.500" fontWeight="700" fill="#222" fontFamily="'Open Sans', sans-serif">
            PRE
          </text>
        </svg>
      </div>
    </footer>
  );
}

export default function App() {
  return (
    <div className="relative flex h-[1078px] w-[1918px] flex-col overflow-hidden bg-[#efefef] font-['DejaVu_Sans_Condensed','DejaVu_Sans',sans-serif] text-[16px] leading-[20px] [font-stretch:condensed]">
      <TopBar />
      <div className="flex flex-1">
        <div className="flex w-[1883px] shrink-0 flex-col pl-[2px]">
          <div className="flex h-[36px] shrink-0 items-end">
            <div className="flex h-[35px] w-[203px] items-center justify-between border-2 border-b-0 border-[#b0b0b0] bg-[#f1f1f1] pr-[11px] pl-[8px] text-[#333]">
              <span className="tracking-[0.240px]">Cotação - 03.9.0520</span>
              <G w={12} h={12}>
                <path d="m1.500 1.500 9 9M10.500 1.500l-9 9" stroke="#777" strokeWidth="1.600" />
              </G>
            </div>
          </div>
          <main className="flex h-[848px] shrink-0 flex-col border border-t-2 border-r-2 border-b-2 border-[#a8a8a8] bg-white">
            <Toolbars />
            <DataGrid />
          </main>
          <div className="flex flex-1 items-end gap-[6px] pl-[4px] text-[#333]">
            <div className="flex h-[33px] w-[116px] items-center border-2 border-b-0 border-[#cbcbcb] bg-[#dadada] pt-px pl-[10px]">
              <G w={22} h={18}>
                <path d="M5 1h12l4 6H1Z" fill="#1593b3" stroke="#44636c" />
                <rect x="1" y="7" width="20" height="9.500" rx="1.500" fill="#fff" stroke="#44636c" strokeWidth="1.600" />
                <path d="M11 12h2M15 12h2" stroke="#333" strokeWidth="1.800" />
              </G>
              <span className="ml-[3px] tracking-[-0.250px]">Aplicação</span>
            </div>
            <div className="flex h-[33px] w-[129px] items-center border-2 border-b-0 border-[#cbcbcb] bg-[#dadada] pt-px pl-[10px]">
              <G w={21} h={18}>
                <path d="M1 1h19v13H9l-3 3v-3H1Z" fill="#f4fbfd" stroke="#44636c" strokeWidth="1.600" />
                <path d="M4 4.500h13M4 7.500h10M4 10.500h7" stroke="#5bb8cf" strokeWidth="1.800" />
              </G>
              <span className="ml-[3px] tracking-[-0.100px]">Mensagens</span>
            </div>
          </div>
        </div>
        <SideTabs />
      </div>
      <Taskbar />
      <Dialog />
    </div>
  );
}
